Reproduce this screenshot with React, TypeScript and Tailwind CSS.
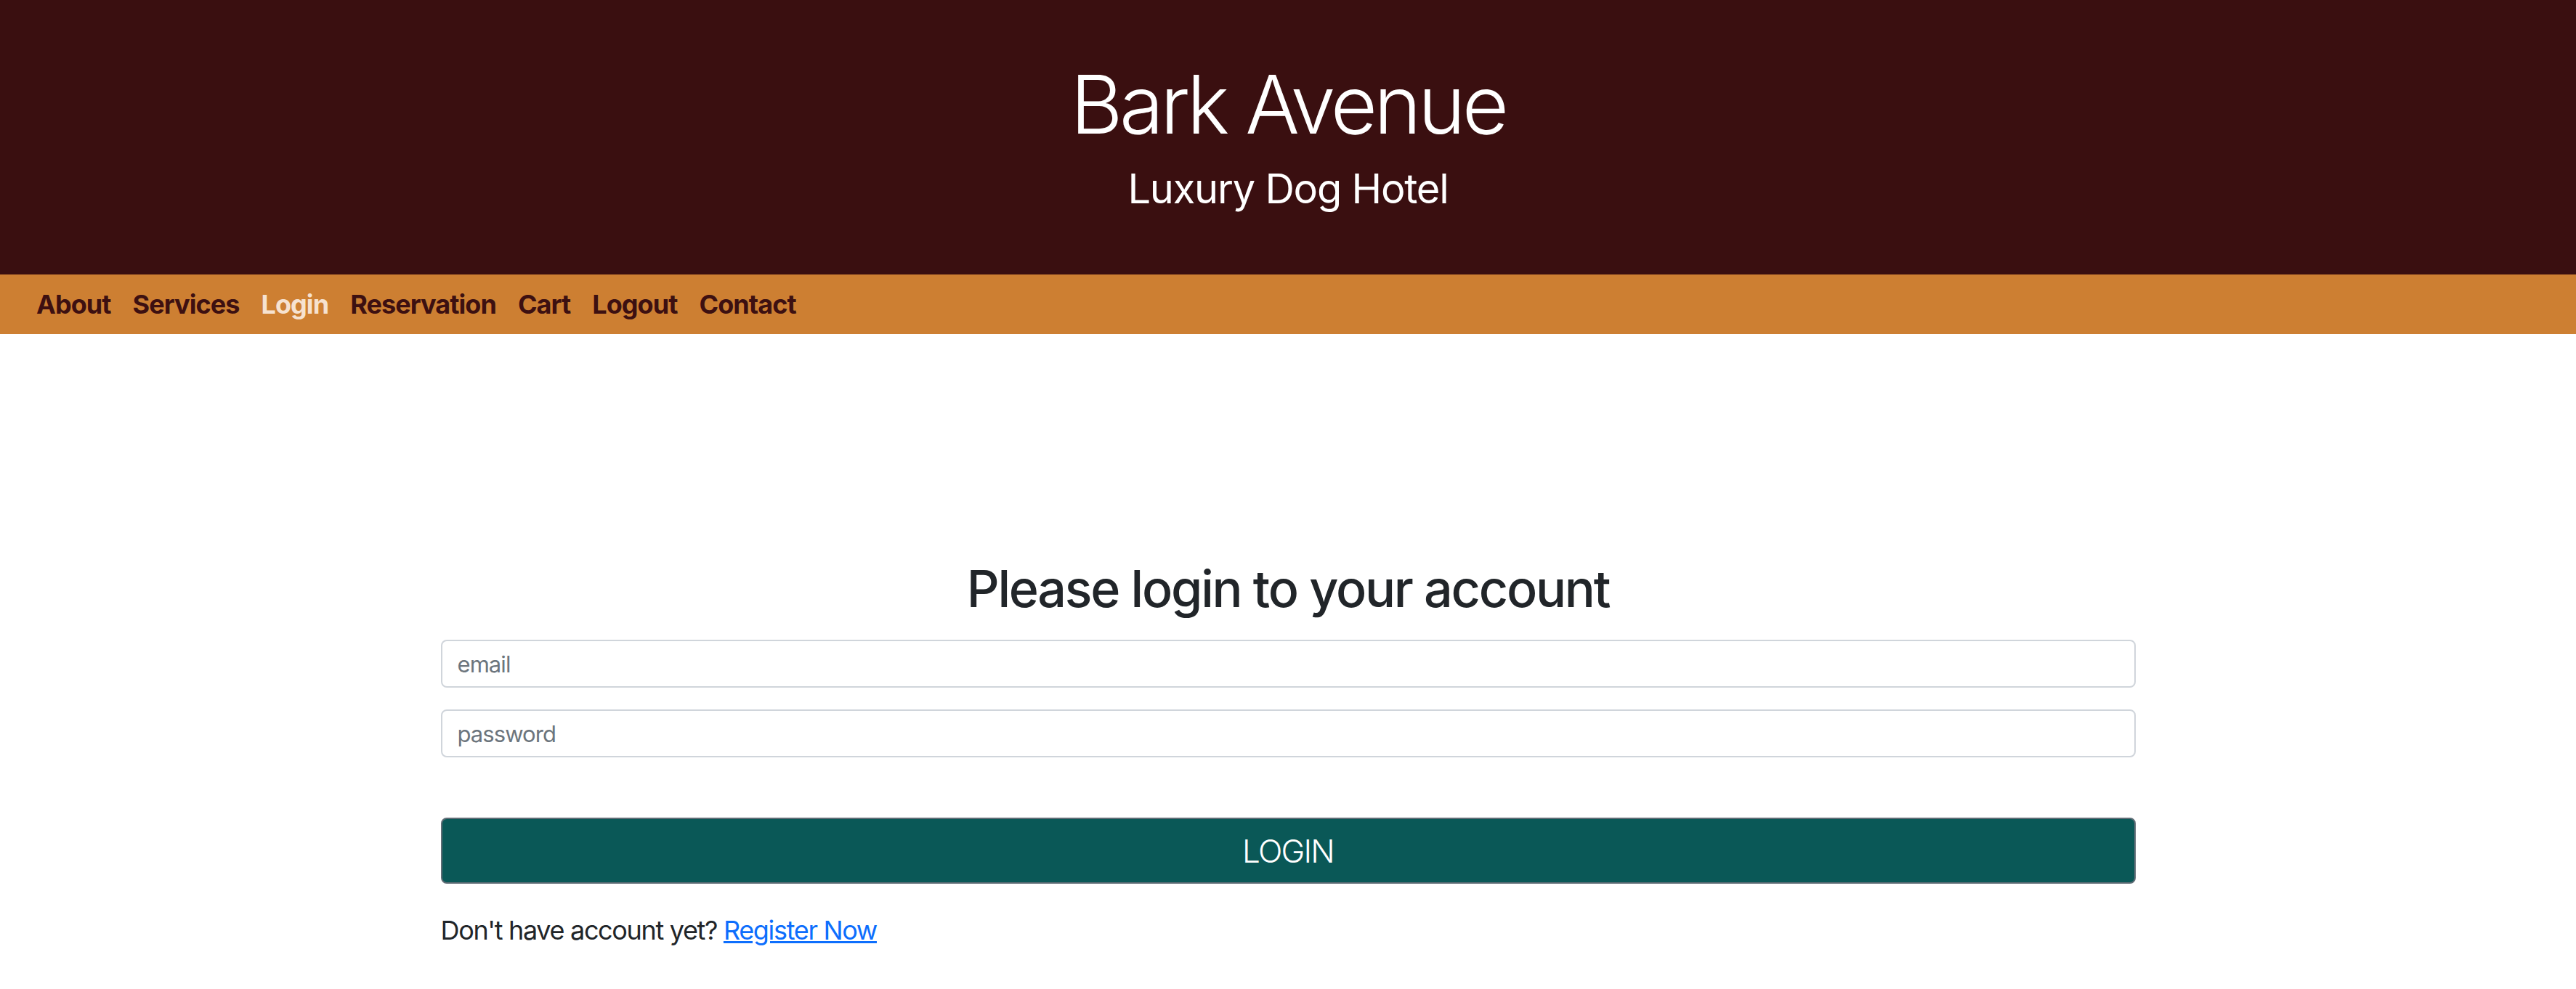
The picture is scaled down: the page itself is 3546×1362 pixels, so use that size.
import React from 'react';

const links = ['About', 'Services', 'Login', 'Reservation', 'Cart', 'Logout', 'Contact'];

export default function App() {
  return (
    <div className="min-h-screen bg-white font-['Inter',sans-serif] text-[#212529]">
      <header className="h-[378px] bg-[#3a0f10] flex flex-col items-center pt-[88px] text-white">
        <h1 className="text-[111px] leading-none font-light tracking-[-0.042em]">Bark Avenue</h1>
        <p className="mt-[33px] text-[56px] leading-none tracking-[-0.022em]">Luxury Dog Hotel</p>
      </header>

      <nav className="h-[82px] bg-[#cd7f32] flex items-center gap-[30px] px-[50px]">
        {links.map((l) => (
          <a
            key={l}
            href="#"
            className={
              'text-[36px] leading-none font-bold tracking-[-0.026em] ' +
              (l === 'Login' ? 'text-[#f6e2d0]' : 'text-[#3d1011]')
            }
          >
            {l}
          </a>
        ))}
      </nav>

      <main className="w-[2333px] mx-auto pt-[316px]">
        <h2 className="text-center text-[70px] leading-none font-medium tracking-[-0.032em]">
          Please login to your account
        </h2>
        <form className="mt-[35px] flex flex-col gap-[30px]" onSubmit={(e) => e.preventDefault()}>
          <input
            type="email"
            placeholder="email"
            className="h-[66px] w-full rounded-[8px] border-2 border-[#d0d5db] px-[21px] text-[31px] tracking-[-0.03em] placeholder:text-[#6c757d] outline-none"
          />
          <input
            type="password"
            placeholder="password"
            className="h-[66px] w-full rounded-[8px] border-2 border-[#d0d5db] px-[21px] text-[31px] tracking-[-0.03em] placeholder:text-[#6c757d] outline-none"
          />
          <button
            type="submit"
            className="mt-[53px] h-[91px] w-full rounded-[8px] border-2 border-[#5f6c75] bg-[#0a5857] text-white text-[44px] font-light tracking-[-0.04em]"
          >
            LOGIN
          </button>
        </form>
        <p className="mt-[46px] text-[36px] leading-none tracking-[-0.037em]">
          Don't have account yet?{' '}
          <a href="#" className="text-[#0d6efd] underline">
            Register Now
          </a>
        </p>
      </main>
    </div>
  );
}
